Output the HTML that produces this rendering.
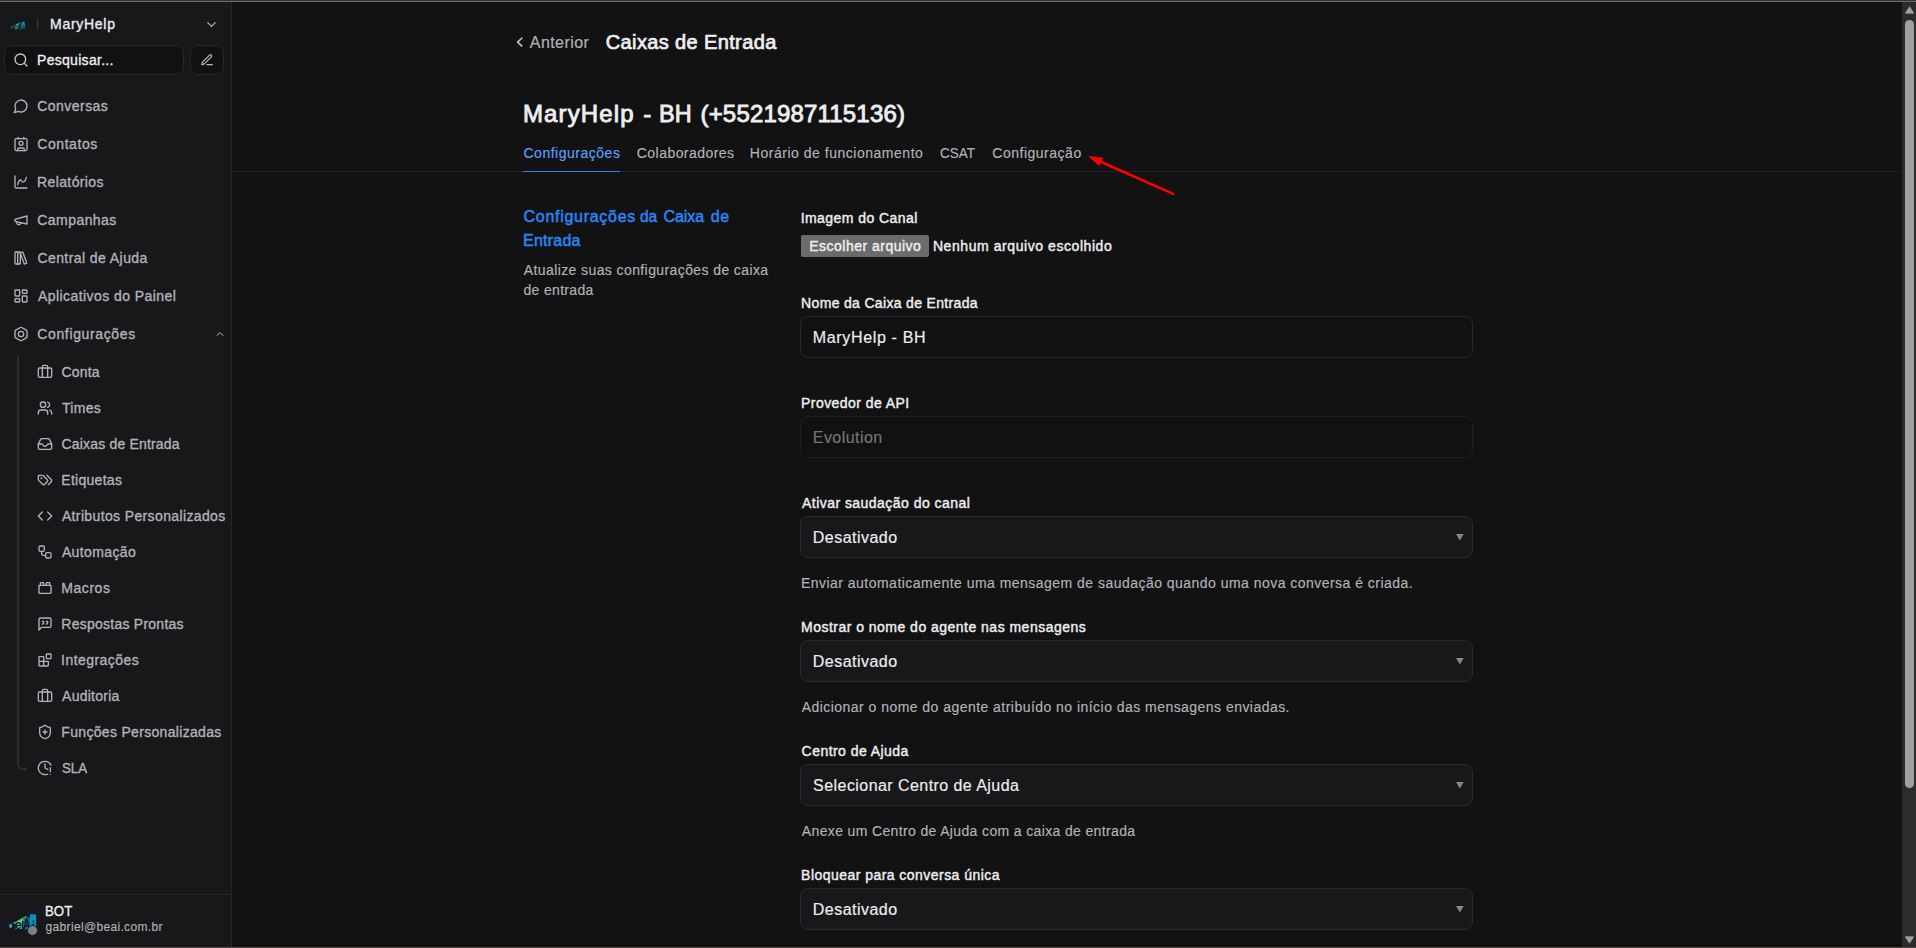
<!DOCTYPE html><html lang="pt-BR"><head><meta charset="utf-8"><title>Caixas de Entrada</title><style>
html,body{margin:0;padding:0;background:#121213;}
body{width:1916px;height:948px;overflow:hidden;position:relative;font-family:"Liberation Sans",sans-serif;}
.t{position:absolute;white-space:pre;line-height:20px;height:20px;font-weight:400;}
.t{-webkit-text-stroke:0.011em currentColor;}
.m{-webkit-text-stroke:0.024em currentColor;}
.b{-webkit-text-stroke:0.036em currentColor;}
.l{-webkit-text-stroke:0.03em currentColor;}
.a{position:absolute;}
svg.i{position:absolute;fill:none;stroke:currentColor;stroke-width:2;stroke-linecap:round;stroke-linejoin:round;color:#b0b4ba;overflow:visible;}
.sb{left:0;top:0;width:231px;height:948px;background:#18181b;border-right:1px solid #26262a;}
.box{border:1px solid #26262a;border-radius:8px;background:#111113;box-sizing:border-box;}
.sel{border:1px solid #2a2a2f;border-radius:8px;background:#18181b;box-sizing:border-box;}
.inp{border:1px solid #27272b;border-radius:8px;background:#111112;box-sizing:border-box;}
.tri{width:0;height:0;border-left:3.8px solid transparent;border-right:3.8px solid transparent;border-top:6.2px solid #88898f;}
</style></head><body>
<div class="a sb"></div>
<div class="a" style="left:37px;top:18px;width:1px;height:12px;background:#38383b"></div>
<div class="a box" style="left:4px;top:45px;width:180px;height:30px"></div>
<div class="a box" style="left:190px;top:45px;width:34px;height:30px"></div>
<!-- logo -->
<svg class="a" style="left:9.9px;top:17.4px;opacity:.9" width="15.2" height="15.2" viewBox="0 0 30 30"><path d="M1.2 19.4 L8.4 17 L19.6 10.4 L19.6 13.8 L14.8 16.6 L14.8 24 L8.6 24 L8.6 18.6 Z" fill="#62cf68"/>
<circle cx="3.5" cy="21.3" r="2.1" fill="#58b95c"/>
<rect x="16.2" y="12.4" width="6.6" height="12" fill="#146f80"/>
<rect x="22.9" y="9.2" width="6.3" height="13.4" rx="0.9" fill="#0b8fb2"/>
<path d="M18.6 11.4 Q23 8.6 26 4.2" stroke="#0a1d50" stroke-width="1.3" fill="none"/>
<path d="M27.6 2.4 L27.2 6.8 L24 4.2Z" fill="#0a1d50"/>
<text x="-0.4" y="24.4" font-family="Liberation Sans, sans-serif" font-size="13" font-weight="700" fill="#06194a">be</text>
<path d="M17 24.4 L19.6 13.4 L22.3 24.4 M18 20.8 L21.4 20.8" stroke="#06194a" stroke-width="1.7" fill="none"/>
<rect x="25.6" y="15.6" width="1.5" height="1.6" fill="#06194a"/><rect x="25.6" y="18.2" width="1.5" height="4.2" fill="#06194a"/></svg>
<!-- tree line -->
<div class="a" style="left:17px;top:356px;width:10px;height:414px;border-left:2px solid #2a2f33;border-bottom:2px solid #2a2f33;border-bottom-left-radius:6px;box-sizing:border-box"></div>
<!-- user block -->
<div class="a" style="left:0;top:894px;width:231px;height:1px;background:#26262a"></div>
<svg class="a" style="left:7px;top:905px" width="30" height="30" viewBox="0 0 30 30"><path d="M1.2 19.4 L8.4 17 L19.6 10.4 L19.6 13.8 L14.8 16.6 L14.8 24 L8.6 24 L8.6 18.6 Z" fill="#62cf68"/>
<circle cx="3.5" cy="21.3" r="2.1" fill="#58b95c"/>
<rect x="16.2" y="12.4" width="6.6" height="12" fill="#146f80"/>
<rect x="22.9" y="9.2" width="6.3" height="13.4" rx="0.9" fill="#0b8fb2"/>
<path d="M18.6 11.4 Q23 8.6 26 4.2" stroke="#0a1d50" stroke-width="1.3" fill="none"/>
<path d="M27.6 2.4 L27.2 6.8 L24 4.2Z" fill="#0a1d50"/>
<text x="-0.4" y="24.4" font-family="Liberation Sans, sans-serif" font-size="13" font-weight="700" fill="#06194a">be</text>
<path d="M17 24.4 L19.6 13.4 L22.3 24.4 M18 20.8 L21.4 20.8" stroke="#06194a" stroke-width="1.7" fill="none"/>
<rect x="25.6" y="15.6" width="1.5" height="1.6" fill="#06194a"/><rect x="25.6" y="18.2" width="1.5" height="4.2" fill="#06194a"/></svg>
<div class="a" style="left:26.6px;top:924.6px;width:9.6px;height:9.6px;border-radius:50%;background:#7c808c;border:1px solid #18181b"></div>
<!-- top + bottom chrome lines -->
<div class="a" style="left:0;top:0;width:1916px;height:1px;background:#343434;z-index:9"></div>
<div class="a" style="left:0;top:1px;width:1916px;height:1px;background:#6b6b6b;z-index:9"></div>
<div class="a" style="left:0;top:947px;width:1916px;height:1px;background:#50483c;z-index:9"></div>
<!-- scrollbar -->
<div class="a" style="left:1902px;top:2px;width:14px;height:945px;background:#2c2c2c"></div>
<div class="a" style="left:1905px;top:20px;width:9px;height:768px;border-radius:4.5px;background:#a0a0a0"></div>
<svg class="a" style="left:1905px;top:6px" width="9" height="8" viewBox="0 0 9 8"><path d="M4.5 0.8 L8.6 7.2 L0.4 7.2Z" fill="#a0a0a0" stroke="#a0a0a0" stroke-width="0.8" stroke-linejoin="round"/></svg>
<svg class="a" style="left:1905px;top:936px" width="9" height="8" viewBox="0 0 9 8"><path d="M4.5 7.2 L8.6 0.8 L0.4 0.8Z" fill="#a0a0a0" stroke="#a0a0a0" stroke-width="0.8" stroke-linejoin="round"/></svg>
<!-- tabs divider & underline -->
<div class="a" style="left:232px;top:171px;width:1670px;height:1px;background:#212124"></div>
<div class="a" style="left:523px;top:171px;width:97px;height:1px;background:#2b85f6"></div>
<!-- arrow -->
<svg class="a" style="left:1080px;top:150px" width="100" height="50" viewBox="1080 150 100 50"><line x1="1099" y1="161" x2="1173.3" y2="193.9" stroke="#f00" stroke-width="2.5" stroke-linecap="round"/><path d="M1088.1 155.9 L1103.4 157.7 L1099.2 165.9Z" fill="#f00"/></svg>
<!-- file button -->
<div class="a" style="left:801px;top:235px;width:128px;height:22px;border-radius:2px;background:#6b6b6b"></div>
<!-- inputs -->
<div class="a inp" style="left:800px;top:316px;width:673px;height:42px"></div>
<div class="a inp" style="left:800px;top:416px;width:673px;height:42px;border-color:#1f1f22"></div>
<div class="a sel" style="left:800px;top:516px;width:673px;height:42px"></div>
<div class="a sel" style="left:800px;top:640px;width:673px;height:42px"></div>
<div class="a sel" style="left:800px;top:764px;width:673px;height:42px"></div>
<div class="a sel" style="left:800px;top:888px;width:673px;height:42px"></div>
<svg class="a" style="left:1455.6px;top:534px" width="8" height="7" viewBox="0 0 8 7"><path d="M0 0.1 L7.7 0.1 L3.85 6.4Z" fill="#87888e"/></svg>
<svg class="a" style="left:1455.6px;top:658px" width="8" height="7" viewBox="0 0 8 7"><path d="M0 0.1 L7.7 0.1 L3.85 6.4Z" fill="#87888e"/></svg>
<svg class="a" style="left:1455.6px;top:782px" width="8" height="7" viewBox="0 0 8 7"><path d="M0 0.1 L7.7 0.1 L3.85 6.4Z" fill="#87888e"/></svg>
<svg class="a" style="left:1455.6px;top:906px" width="8" height="7" viewBox="0 0 8 7"><path d="M0 0.1 L7.7 0.1 L3.85 6.4Z" fill="#87888e"/></svg>
<svg class="a" style="left:510px;top:30px" width="20" height="24" viewBox="510 30 20 24"><polyline points="522.3,37.8 517.6,42.1 522.3,46.4" fill="none" stroke="#c4c6cc" stroke-width="1.55" stroke-linecap="butt" stroke-linejoin="round"/></svg>

<svg class="i" style="left:203.6px;top:16.6px;color:#b0b4ba;" width="15" height="15" viewBox="0 0 24 24" stroke-width="2"><path d="m6 9 6 6 6-6"/></svg>
<svg class="i" style="left:13px;top:52px;color:#c6c8cd;" width="16" height="16" viewBox="0 0 24 24" stroke-width="2"><circle cx="11" cy="11" r="8"/><path d="m21 21-4.3-4.3"/></svg>
<svg class="i" style="left:199.8px;top:53px;color:#bcbec4;" width="14" height="14" viewBox="0 0 24 24" stroke-width="2"><path d="M12 20h9"/><path d="M16.376 3.622a1 1 0 0 1 3.002 3.002L7.368 18.635a2 2 0 0 1-.855.506l-2.872.838a.5.5 0 0 1-.62-.62l.838-2.872a2 2 0 0 1 .506-.854z"/></svg>
<svg class="i" style="left:12.5px;top:98px;" width="16" height="16" viewBox="0 0 24 24" stroke-width="2"><path d="M7.9 20A9 9 0 1 0 4 16.1L2 22Z"/></svg>
<svg class="i" style="left:12.5px;top:136px;" width="16" height="16" viewBox="0 0 24 24" stroke-width="2"><path d="M16 2v2"/><path d="M7 22v-2a2 2 0 0 1 2-2h6a2 2 0 0 1 2 2v2"/><path d="M8 2v2"/><circle cx="12" cy="11" r="3"/><rect x="3" y="4" width="18" height="18" rx="2"/></svg>
<svg class="i" style="left:12.5px;top:174px;" width="16" height="16" viewBox="0 0 24 24" stroke-width="2"><path d="M3 3v16a2 2 0 0 0 2 2h16"/><path d="M7 16c.5-2 1.5-7 4-7 2 0 2 3 4 3 2.5 0 4.5-5 5-7"/></svg>
<svg class="i" style="left:12.5px;top:212px;" width="16" height="16" viewBox="0 0 24 24" stroke-width="2"><path d="m3 11 18-5v12L3 14v-3z"/><path d="M11.6 16.8a3 3 0 1 1-5.8-1.6"/></svg>
<svg class="i" style="left:12.5px;top:250px;" width="16" height="16" viewBox="0 0 24 24" stroke-width="2"><rect width="8" height="18" x="3" y="3" rx="1"/><path d="M7 3v18"/><path d="M20.4 18.9c.2.5-.1 1.1-.6 1.3l-1.9.7c-.5.2-1.1-.1-1.3-.6L11.1 5.1c-.2-.5.1-1.1.6-1.3l1.9-.7c.5-.2 1.1.1 1.3.6Z"/></svg>
<svg class="i" style="left:12.5px;top:288px;" width="16" height="16" viewBox="0 0 24 24" stroke-width="2"><rect width="7" height="9" x="3" y="3" rx="1"/><rect width="7" height="5" x="14" y="3" rx="1"/><rect width="7" height="9" x="14" y="12" rx="1"/><rect width="7" height="5" x="3" y="16" rx="1"/></svg>
<svg class="i" style="left:12.5px;top:326px;" width="16" height="16" viewBox="0 0 24 24" stroke-width="2"><path d="M21 16V8a2 2 0 0 0-1-1.73l-7-4a2 2 0 0 0-2 0l-7 4A2 2 0 0 0 3 8v8a2 2 0 0 0 1 1.73l7 4a2 2 0 0 0 2 0l7-4A2 2 0 0 0 21 16z"/><circle cx="12" cy="12" r="4"/></svg>
<svg class="i" style="left:214px;top:328px;color:#b0b4ba;" width="12" height="12" viewBox="0 0 24 24" stroke-width="2.4"><path d="m18 15-6-6-6 6"/></svg>
<svg class="i" style="left:36.7px;top:364px;" width="16" height="16" viewBox="0 0 24 24" stroke-width="2"><path d="M16 20V4a2 2 0 0 0-2-2h-4a2 2 0 0 0-2 2v16"/><rect width="20" height="14" x="2" y="6" rx="2"/></svg>
<svg class="i" style="left:36.7px;top:400px;" width="16" height="16" viewBox="0 0 24 24" stroke-width="2"><path d="M16 21v-2a4 4 0 0 0-4-4H6a4 4 0 0 0-4 4v2"/><circle cx="9" cy="7" r="4"/><path d="M22 21v-2a4 4 0 0 0-3-3.87"/><path d="M16 3.13a4 4 0 0 1 0 7.75"/></svg>
<svg class="i" style="left:36.7px;top:436px;" width="16" height="16" viewBox="0 0 24 24" stroke-width="2"><polyline points="22 12 16 12 14 15 10 15 8 12 2 12"/><path d="M5.45 5.11 2 12v6a2 2 0 0 0 2 2h16a2 2 0 0 0 2-2v-6l-3.45-6.89A2 2 0 0 0 16.76 4H7.24a2 2 0 0 0-1.79 1.11z"/></svg>
<svg class="i" style="left:36.7px;top:472px;" width="16" height="16" viewBox="0 0 24 24" stroke-width="2"><path d="m15 5 6.3 6.3a2.4 2.4 0 0 1 0 3.4L17 19"/><path d="M9.586 5.586A2 2 0 0 0 8.172 5H3a1 1 0 0 0-1 1v5.172a2 2 0 0 0 .586 1.414L8.29 18.29a2.426 2.426 0 0 0 3.42 0l3.58-3.58a2.426 2.426 0 0 0 0-3.42z"/><circle cx="6.5" cy="9.5" r=".5" fill="currentColor"/></svg>
<svg class="i" style="left:36.7px;top:508px;" width="16" height="16" viewBox="0 0 24 24" stroke-width="2"><polyline points="16 18 22 12 16 6"/><polyline points="8 6 2 12 8 18"/></svg>
<svg class="i" style="left:36.7px;top:544px;" width="16" height="16" viewBox="0 0 24 24" stroke-width="2"><rect width="8" height="8" x="3" y="3" rx="2"/><path d="M7 11v4a2 2 0 0 0 2 2h4"/><rect width="8" height="8" x="13" y="13" rx="2"/></svg>
<svg class="i" style="left:36.7px;top:580px;" width="16" height="16" viewBox="0 0 24 24" stroke-width="2"><rect width="18" height="12" x="3" y="8" rx="1"/><path d="M10 8V5c0-.6-.4-1-1-1H6a1 1 0 0 0-1 1v3"/><path d="M19 8V5c0-.6-.4-1-1-1h-3a1 1 0 0 0-1 1v3"/></svg>
<svg class="i" style="left:36.7px;top:616px;" width="16" height="16" viewBox="0 0 24 24" stroke-width="2"><path d="M21 15a2 2 0 0 1-2 2H7l-4 4V5a2 2 0 0 1 2-2h14a2 2 0 0 1 2 2z"/><path d="M8 12a2 2 0 0 0 2-2V8H8"/><path d="M14 12a2 2 0 0 0 2-2V8h-2"/></svg>
<svg class="i" style="left:36.7px;top:652px;" width="16" height="16" viewBox="0 0 24 24" stroke-width="2"><rect width="7" height="7" x="14" y="3" rx="1"/><path d="M10 21V8a1 1 0 0 0-1-1H4a1 1 0 0 0-1 1v12a1 1 0 0 0 1 1h12a1 1 0 0 0 1-1v-5a1 1 0 0 0-1-1H3"/></svg>
<svg class="i" style="left:36.7px;top:688px;" width="16" height="16" viewBox="0 0 24 24" stroke-width="2"><path d="M16 20V4a2 2 0 0 0-2-2h-4a2 2 0 0 0-2 2v16"/><rect width="20" height="14" x="2" y="6" rx="2"/></svg>
<svg class="i" style="left:36.7px;top:724px;" width="16" height="16" viewBox="0 0 24 24" stroke-width="2"><path d="M20 13c0 5-3.5 7.5-7.66 8.95a1 1 0 0 1-.67-.01C7.5 20.5 4 18 4 13V6a1 1 0 0 1 1-1c2 0 4.5-1.2 6.24-2.72a1.17 1.17 0 0 1 1.52 0C14.51 3.81 17 5 19 5a1 1 0 0 1 1 1z"/><path d="M9 12h6"/><path d="M12 9v6"/></svg>
<svg class="i" style="left:36.7px;top:760px;" width="16" height="16" viewBox="0 0 24 24" stroke-width="2"><path d="M12 6v6l4 2"/><path d="M16 21.16a10 10 0 1 1 5-13.516"/><path d="M20 11.5v6"/><path d="M20 21.5h.01"/></svg>
<span class="t m" style="left:50.1px;top:13.7px;font-size:14px;letter-spacing:0.71px;color:#edeef0">MaryHelp</span>
<span class="t m" style="left:37.0px;top:50.4px;font-size:14px;letter-spacing:0.30px;color:#edeef0">Pesquisar...</span>
<span class="t m" style="left:37.3px;top:96.2px;font-size:14px;letter-spacing:0.45px;color:#b0b4ba">Conversas</span>
<span class="t m" style="left:37.3px;top:134.2px;font-size:14px;letter-spacing:0.56px;color:#b0b4ba">Contatos</span>
<span class="t m" style="left:37.0px;top:172.2px;font-size:14px;letter-spacing:0.39px;color:#b0b4ba">Relatórios</span>
<span class="t m" style="left:37.3px;top:210.2px;font-size:14px;letter-spacing:0.44px;color:#b0b4ba">Campanhas</span>
<span class="t m" style="left:37.4px;top:248.2px;font-size:14px;letter-spacing:0.43px;color:#b0b4ba">Central de Ajuda</span>
<span class="t m" style="left:38.0px;top:286.2px;font-size:14px;letter-spacing:0.43px;color:#b0b4ba">Aplicativos do Painel</span>
<span class="t m" style="left:37.3px;top:324.2px;font-size:14px;letter-spacing:0.63px;color:#b0b4ba">Configurações</span>
<span class="t m" style="left:61.5px;top:362.0px;font-size:14px;letter-spacing:0.16px;color:#b0b4ba">Conta</span>
<span class="t m" style="left:61.9px;top:398.0px;font-size:14px;letter-spacing:0.31px;color:#b0b4ba">Times</span>
<span class="t m" style="left:61.4px;top:434.0px;font-size:14px;letter-spacing:0.19px;color:#b0b4ba">Caixas de Entrada</span>
<span class="t m" style="left:61.3px;top:470.0px;font-size:14px;letter-spacing:0.28px;color:#b0b4ba">Etiquetas</span>
<span class="t m" style="left:61.9px;top:506.0px;font-size:14px;letter-spacing:0.37px;color:#b0b4ba">Atributos Personalizados</span>
<span class="t m" style="left:61.9px;top:542.0px;font-size:14px;letter-spacing:0.38px;color:#b0b4ba">Automação</span>
<span class="t m" style="left:61.3px;top:578.0px;font-size:14px;letter-spacing:0.55px;color:#b0b4ba">Macros</span>
<span class="t m" style="left:61.3px;top:614.0px;font-size:14px;letter-spacing:0.25px;color:#b0b4ba">Respostas Prontas</span>
<span class="t m" style="left:61.1px;top:650.0px;font-size:14px;letter-spacing:0.45px;color:#b0b4ba">Integrações</span>
<span class="t m" style="left:62.1px;top:686.0px;font-size:14px;letter-spacing:0.24px;color:#b0b4ba">Auditoria</span>
<span class="t m" style="left:61.3px;top:722.0px;font-size:14px;letter-spacing:0.32px;color:#b0b4ba">Funções Personalizadas</span>
<span class="t m" style="left:61.9px;top:758.0px;font-size:14px;transform:scaleX(0.9502);transform-origin:0 0;color:#b0b4ba">SLA</span>
<span class="t m" style="left:44.9px;top:900.9px;font-size:14px;transform:scaleX(0.9460);transform-origin:0 0;color:#edeef0">BOT</span>
<span class="t" style="left:45.6px;top:917.2px;font-size:12px;letter-spacing:0.33px;color:#b0b4ba">gabriel@beai.com.br</span>
<span class="t" style="left:529.8px;top:32.7px;font-size:16px;letter-spacing:0.43px;color:#b0b4ba">Anterior</span>
<span class="t b" style="left:605.8px;top:32.4px;font-size:20px;letter-spacing:0.37px;color:#edeef0">Caixas de Entrada</span>
<span class="t b" style="left:522.9px;top:103.8px;font-size:24px;letter-spacing:1.14px;color:#edeef0">MaryHelp</span>
<span class="t b" style="left:643.3px;top:103.8px;font-size:24px;letter-spacing:0.00px;color:#edeef0">-</span>
<span class="t b" style="left:659.4px;top:103.8px;font-size:24px;transform:scaleX(0.9774);transform-origin:0 0;color:#edeef0">BH</span>
<span class="t b" style="left:700.5px;top:103.8px;font-size:24px;letter-spacing:0.18px;color:#edeef0">(+5521987115136)</span>
<span class="t" style="left:523.5px;top:143.2px;font-size:14px;letter-spacing:0.51px;color:#5aa1ff">Configurações</span>
<span class="t" style="left:636.8px;top:143.2px;font-size:14px;letter-spacing:0.45px;color:#b0b4ba">Colaboradores</span>
<span class="t" style="left:749.8px;top:143.2px;font-size:14px;letter-spacing:0.52px;color:#b0b4ba">Horário de funcionamento</span>
<span class="t" style="left:940.0px;top:143.2px;font-size:14px;transform:scaleX(0.9597);transform-origin:0 0;color:#b0b4ba">CSAT</span>
<span class="t" style="left:992.3px;top:143.2px;font-size:14px;letter-spacing:0.51px;color:#b0b4ba">Configuração</span>
<span class="t l" style="left:523.6px;top:206.5px;font-size:16px;letter-spacing:0.71px;color:#2b86f7">Configurações</span>
<span class="t l" style="left:640.2px;top:206.5px;font-size:16px;transform:scaleX(0.9681);transform-origin:0 0;color:#2b86f7">da</span>
<span class="t l" style="left:663.4px;top:206.5px;font-size:16px;letter-spacing:-0.04px;color:#2b86f7">Caixa</span>
<span class="t l" style="left:710.8px;top:206.5px;font-size:16px;letter-spacing:0.45px;color:#2b86f7">de</span>
<span class="t l" style="left:523.1px;top:230.5px;font-size:16px;letter-spacing:0.23px;color:#2b86f7">Entrada</span>
<span class="t" style="left:523.8px;top:260.2px;font-size:14px;letter-spacing:0.40px;color:#b0b4ba">Atualize suas configurações de caixa</span>
<span class="t" style="left:523.5px;top:280.1px;font-size:14px;letter-spacing:0.32px;color:#b0b4ba">de entrada</span>
<span class="t l" style="left:800.7px;top:208.1px;font-size:14px;letter-spacing:0.44px;color:#edeef0">Imagem do Canal</span>
<span class="t l" style="left:809.3px;top:235.8px;font-size:14px;letter-spacing:0.48px;color:#edeef0">Escolher arquivo</span>
<span class="t l" style="left:932.9px;top:235.8px;font-size:14px;letter-spacing:0.57px;color:#edeef0">Nenhum arquivo escolhido</span>
<span class="t l" style="left:801.1px;top:293.2px;font-size:14px;letter-spacing:0.33px;color:#edeef0">Nome da Caixa de Entrada</span>
<span class="t l" style="left:801.1px;top:393.2px;font-size:14px;letter-spacing:0.43px;color:#edeef0">Provedor de API</span>
<span class="t l" style="left:802.0px;top:493.2px;font-size:14px;letter-spacing:0.46px;color:#edeef0">Ativar saudação do canal</span>
<span class="t l" style="left:801.0px;top:617.2px;font-size:14px;letter-spacing:0.48px;color:#edeef0">Mostrar o nome do agente nas mensagens</span>
<span class="t l" style="left:801.6px;top:741.2px;font-size:14px;letter-spacing:0.45px;color:#edeef0">Centro de Ajuda</span>
<span class="t l" style="left:801.1px;top:865.2px;font-size:14px;letter-spacing:0.46px;color:#edeef0">Bloquear para conversa única</span>
<span class="t" style="left:812.8px;top:327.6px;font-size:16px;letter-spacing:0.65px;color:#edeef0">MaryHelp - BH</span>
<span class="t" style="left:812.8px;top:427.6px;font-size:16px;letter-spacing:0.44px;color:#767678">Evolution</span>
<span class="t" style="left:812.8px;top:527.6px;font-size:16px;letter-spacing:0.47px;color:#edeef0">Desativado</span>
<span class="t" style="left:812.8px;top:651.6px;font-size:16px;letter-spacing:0.47px;color:#edeef0">Desativado</span>
<span class="t" style="left:813.1px;top:775.6px;font-size:16px;letter-spacing:0.44px;color:#edeef0">Selecionar Centro de Ajuda</span>
<span class="t" style="left:812.8px;top:899.6px;font-size:16px;letter-spacing:0.47px;color:#edeef0">Desativado</span>
<span class="t" style="left:801.0px;top:573.2px;font-size:14px;letter-spacing:0.47px;color:#b0b4ba">Enviar automaticamente uma mensagem de saudação quando uma nova conversa é criada.</span>
<span class="t" style="left:801.7px;top:697.2px;font-size:14px;letter-spacing:0.46px;color:#b0b4ba">Adicionar o nome do agente atribuído no início das mensagens enviadas.</span>
<span class="t" style="left:801.8px;top:821.2px;font-size:14px;letter-spacing:0.36px;color:#b0b4ba">Anexe um Centro de Ajuda com a caixa de entrada</span>
</body></html>
